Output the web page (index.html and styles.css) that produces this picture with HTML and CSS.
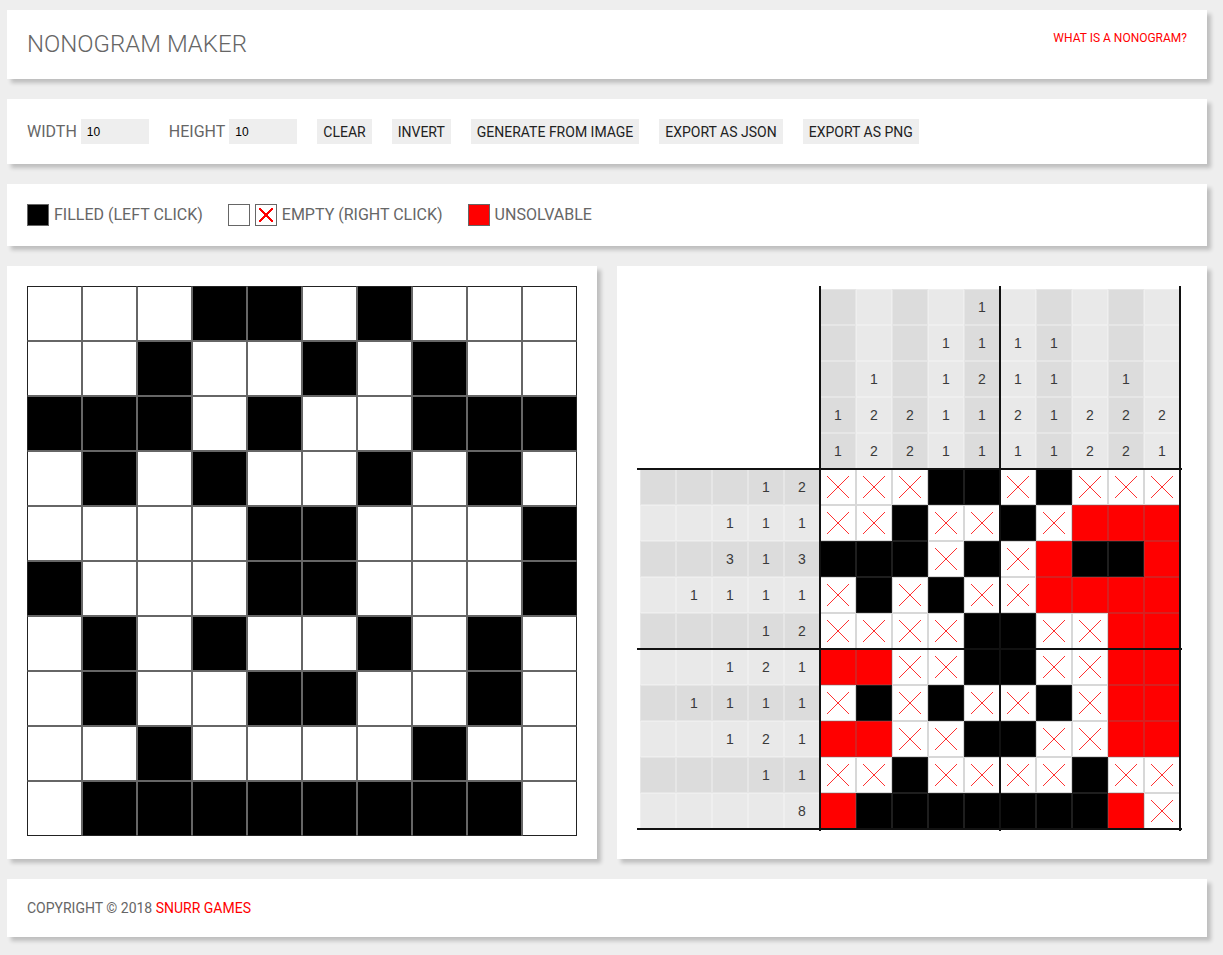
FILE: index.html
```html
<!DOCTYPE html>
<html lang="en">
<head>
<meta charset="utf-8">
<title>Nonogram Maker</title>
<link rel="stylesheet" href="styles.css">
</head>
<body>
<div class="page">
  <header class="card header">
    <h1 class="title">NONOGRAM MAKER</h1>
    <a class="link" href="#">WHAT IS A NONOGRAM?</a>
  </header>

  <section class="card toolbar">
    <label class="field"><span class="label">WIDTH</span><input class="num" type="text" value="10"></label>
    <label class="field"><span class="label">HEIGHT</span><input class="num" type="text" value="10"></label>
    <button class="btn">CLEAR</button>
    <button class="btn">INVERT</button>
    <button class="btn">GENERATE FROM IMAGE</button>
    <button class="btn">EXPORT AS JSON</button>
    <button class="btn">EXPORT AS PNG</button>
  </section>

  <section class="card legend">
    <div class="item"><span class="swatch fill"></span><span>FILLED (LEFT CLICK)</span></div>
    <div class="item"><span class="swatch"></span><span class="swatch cross"></span><span>EMPTY (RIGHT CLICK)</span></div>
    <div class="item"><span class="swatch red"></span><span>UNSOLVABLE</span></div>
  </section>

  <main class="panels">
    <section class="card panel">
      <div class="draw">
        <i></i><i></i><i></i><i class="on"></i><i class="on"></i><i></i><i class="on"></i><i></i><i></i><i></i>
        <i></i><i></i><i class="on"></i><i></i><i></i><i class="on"></i><i></i><i class="on"></i><i></i><i></i>
        <i class="on"></i><i class="on"></i><i class="on"></i><i></i><i class="on"></i><i></i><i></i><i class="on"></i><i class="on"></i><i class="on"></i>
        <i></i><i class="on"></i><i></i><i class="on"></i><i></i><i></i><i class="on"></i><i></i><i class="on"></i><i></i>
        <i></i><i></i><i></i><i></i><i class="on"></i><i class="on"></i><i></i><i></i><i></i><i class="on"></i>
        <i class="on"></i><i></i><i></i><i></i><i class="on"></i><i class="on"></i><i></i><i></i><i></i><i class="on"></i>
        <i></i><i class="on"></i><i></i><i class="on"></i><i></i><i></i><i class="on"></i><i></i><i class="on"></i><i></i>
        <i></i><i class="on"></i><i></i><i></i><i class="on"></i><i class="on"></i><i></i><i></i><i class="on"></i><i></i>
        <i></i><i></i><i class="on"></i><i></i><i></i><i></i><i></i><i class="on"></i><i></i><i></i>
        <i></i><i class="on"></i><i class="on"></i><i class="on"></i><i class="on"></i><i class="on"></i><i class="on"></i><i class="on"></i><i class="on"></i><i></i>
      </div>
    </section>

    <section class="card panel">
      <div class="board">
        <div class="corner"></div>
        <!-- column clues -->
        <i class="k d"></i><i class="k l"></i><i class="k d"></i><i class="k l"></i><i class="k d">1</i><i class="k l"></i><i class="k d"></i><i class="k l"></i><i class="k d"></i><i class="k l"></i>
        <i class="k d"></i><i class="k l"></i><i class="k d"></i><i class="k l">1</i><i class="k d">1</i><i class="k l">1</i><i class="k d">1</i><i class="k l"></i><i class="k d"></i><i class="k l"></i>
        <i class="k d"></i><i class="k l">1</i><i class="k d"></i><i class="k l">1</i><i class="k d">2</i><i class="k l">1</i><i class="k d">1</i><i class="k l"></i><i class="k d">1</i><i class="k l"></i>
        <i class="k d">1</i><i class="k l">2</i><i class="k d">2</i><i class="k l">1</i><i class="k d">1</i><i class="k l">2</i><i class="k d">1</i><i class="k l">2</i><i class="k d">2</i><i class="k l">2</i>
        <i class="k d">1</i><i class="k l">2</i><i class="k d">2</i><i class="k l">1</i><i class="k d">1</i><i class="k l">1</i><i class="k d">1</i><i class="k l">2</i><i class="k d">2</i><i class="k l">1</i>
        <!-- row 0 -->
        <i class="k d"></i><i class="k d"></i><i class="k d"></i><i class="k d">1</i><i class="k d">2</i>
        <i class="g x"></i><i class="g x"></i><i class="g x"></i><i class="g b"></i><i class="g b"></i><i class="g x"></i><i class="g b"></i><i class="g x"></i><i class="g x"></i><i class="g x"></i>
        <!-- row 1 -->
        <i class="k l"></i><i class="k l"></i><i class="k l">1</i><i class="k l">1</i><i class="k l">1</i>
        <i class="g x"></i><i class="g x"></i><i class="g b"></i><i class="g x"></i><i class="g x"></i><i class="g b"></i><i class="g x"></i><i class="g r"></i><i class="g r"></i><i class="g r"></i>
        <!-- row 2 -->
        <i class="k d"></i><i class="k d"></i><i class="k d">3</i><i class="k d">1</i><i class="k d">3</i>
        <i class="g b"></i><i class="g b"></i><i class="g b"></i><i class="g x"></i><i class="g b"></i><i class="g x"></i><i class="g r"></i><i class="g b"></i><i class="g b"></i><i class="g r"></i>
        <!-- row 3 -->
        <i class="k l"></i><i class="k l">1</i><i class="k l">1</i><i class="k l">1</i><i class="k l">1</i>
        <i class="g x"></i><i class="g b"></i><i class="g x"></i><i class="g b"></i><i class="g x"></i><i class="g x"></i><i class="g r"></i><i class="g r"></i><i class="g r"></i><i class="g r"></i>
        <!-- row 4 -->
        <i class="k d"></i><i class="k d"></i><i class="k d"></i><i class="k d">1</i><i class="k d">2</i>
        <i class="g x"></i><i class="g x"></i><i class="g x"></i><i class="g x"></i><i class="g b"></i><i class="g b"></i><i class="g x"></i><i class="g x"></i><i class="g r"></i><i class="g r"></i>
        <!-- row 5 -->
        <i class="k l"></i><i class="k l"></i><i class="k l">1</i><i class="k l">2</i><i class="k l">1</i>
        <i class="g r"></i><i class="g r"></i><i class="g x"></i><i class="g x"></i><i class="g b"></i><i class="g b"></i><i class="g x"></i><i class="g x"></i><i class="g r"></i><i class="g r"></i>
        <!-- row 6 -->
        <i class="k d"></i><i class="k d">1</i><i class="k d">1</i><i class="k d">1</i><i class="k d">1</i>
        <i class="g x"></i><i class="g b"></i><i class="g x"></i><i class="g b"></i><i class="g x"></i><i class="g x"></i><i class="g b"></i><i class="g x"></i><i class="g r"></i><i class="g r"></i>
        <!-- row 7 -->
        <i class="k l"></i><i class="k l"></i><i class="k l">1</i><i class="k l">2</i><i class="k l">1</i>
        <i class="g r"></i><i class="g r"></i><i class="g x"></i><i class="g x"></i><i class="g b"></i><i class="g b"></i><i class="g x"></i><i class="g x"></i><i class="g r"></i><i class="g r"></i>
        <!-- row 8 -->
        <i class="k d"></i><i class="k d"></i><i class="k d"></i><i class="k d">1</i><i class="k d">1</i>
        <i class="g x"></i><i class="g x"></i><i class="g b"></i><i class="g x"></i><i class="g x"></i><i class="g x"></i><i class="g x"></i><i class="g b"></i><i class="g x"></i><i class="g x"></i>
        <!-- row 9 -->
        <i class="k l"></i><i class="k l"></i><i class="k l"></i><i class="k l"></i><i class="k l">8</i>
        <i class="g r"></i><i class="g b"></i><i class="g b"></i><i class="g b"></i><i class="g b"></i><i class="g b"></i><i class="g b"></i><i class="g b"></i><i class="g r"></i><i class="g x"></i>

        <span class="line v v1"></span><span class="line v v2"></span><span class="line v v3"></span>
        <span class="line h h1"></span><span class="line h h2"></span><span class="line h h3"></span>
      </div>
    </section>
  </main>

  <footer class="card footer">COPYRIGHT © 2018 <a class="link-inline" href="#">SNURR GAMES</a></footer>
</div>
</body>
</html>
```

FILE: styles.css
```css
* { box-sizing: border-box; }

body {
  margin: 0;
  background: #eeeeee;
  font-family: Roboto, "Liberation Sans", Arial, sans-serif;
  color: #666;
}

.page {
  width: 1207px;
  padding: 10px 0 18px 7px;
  display: flex;
  flex-direction: column;
  gap: 20px;
}

.card {
  background: #fff;
  box-shadow: 4px 4px 4px rgba(0, 0, 0, 0.2);
  padding: 20px;
}

/* header */
.header {
  display: flex;
  justify-content: space-between;
  align-items: flex-start;
}
.title {
  margin: 0;
  font-size: 24px;
  font-weight: 300;
  line-height: 29px;
  color: #666;
}
.link {
  color: #ff0000;
  font-size: 12px;
  line-height: 16px;
  margin-top: 0;
  text-decoration: none;
}

/* toolbar */
.toolbar {
  display: flex;
  align-items: center;
  gap: 20px;
}
.field {
  display: flex;
  align-items: center;
  gap: 4px;
}
.label {
  font-size: 16px;
  color: #666;
}
.num {
  width: 68px;
  height: 25px;
  border: 0;
  background: #eee;
  padding: 0 6px;
  font-family: "Liberation Sans", Arial, sans-serif;
  font-size: 12px;
  color: #000;
}
.btn {
  height: 25px;
  border: 0;
  background: #eee;
  padding: 0 6px;
  font-family: Roboto, "Liberation Sans", Arial, sans-serif;
  font-size: 14px;
  font-weight: 400;
  color: #222;
}

/* legend */
.legend {
  display: flex;
  align-items: center;
  gap: 25px;
  font-size: 16px;
  line-height: 22px;
  color: #666;
}
.item {
  display: flex;
  align-items: center;
  gap: 5px;
}
.swatch {
  width: 22px;
  height: 22px;
  border: 1px solid #666;
  background: #fff;
  position: relative;
}
.swatch.fill { background: #000; }
.swatch.red { background: #ff0000; }
.swatch.cross::after {
  content: "";
  position: absolute;
  inset: 3px;
  background:
    linear-gradient(45deg, transparent calc(50% - 1px), #ff0000 calc(50% - 1px), #ff0000 calc(50% + 1px), transparent calc(50% + 1px)),
    linear-gradient(-45deg, transparent calc(50% - 1px), #ff0000 calc(50% - 1px), #ff0000 calc(50% + 1px), transparent calc(50% + 1px));
}

/* panels */
.panels {
  display: flex;
  gap: 20px;
}
.panel {
  width: 590px;
  flex: 0 0 590px;
}

/* drawing grid */
.draw {
  display: grid;
  grid-template-columns: repeat(10, 55px);
  grid-auto-rows: 55px;
  margin-bottom: 3px;
}
.draw i {
  display: block;
  border: 1px solid #666;
  background: #fff;
}
.draw i.on { background: #000; }
.draw i:nth-child(10n+1) { border-left-color: #222; }
.draw i:nth-child(10n) { border-right-color: #222; }
.draw i:nth-child(-n+10) { border-top-color: #222; }
.draw i:nth-child(n+91) { border-bottom-color: #222; }

/* nonogram board */
.board {
  position: relative;
  display: grid;
  grid-template-columns: repeat(15, 36px);
  grid-auto-rows: 36px;
  padding: 3px 0 0 3px;
  width: 545px;
  height: 545px;
}
.corner {
  grid-column: 1 / 6;
  grid-row: 1 / 6;
}
.k {
  display: flex;
  align-items: center;
  justify-content: center;
  font-style: normal;
  font-family: "Liberation Sans", Arial, sans-serif;
  font-size: 14px;
  color: #3a3a3a;
  border: 1px solid rgba(255, 255, 255, 0.3);
}
.k.d { background: #dcdcdc; }
.k.l { background: #e9e9e9; }

.g {
  display: block;
  position: relative;
  border: 1px solid rgba(128, 128, 128, 0.3);
}
.g.b { background: #000; border-color: #1e1e1e; }
.g.r { background: #ff0000; border-color: #d82020; }
.g.x { background: #fff; border-color: #d8d8d8; }
.g.x::after {
  content: "";
  position: absolute;
  inset: 6px;
  background:
    linear-gradient(45deg, transparent calc(50% - 0.6px), #ff3030 calc(50% - 0.6px), #ff3030 calc(50% + 0.6px), transparent calc(50% + 0.6px)),
    linear-gradient(-45deg, transparent calc(50% - 0.6px), #ff3030 calc(50% - 0.6px), #ff3030 calc(50% + 0.6px), transparent calc(50% + 0.6px));
}

.line {
  position: absolute;
  background: #111;
}
.v { top: 0; width: 2px; height: 545px; }
.v1 { left: 182px; }
.v2 { left: 362px; }
.v3 { left: 542px; }
.h { left: 0; height: 2px; width: 545px; }
.h1 { top: 182px; }
.h2 { top: 362px; }
.h3 { top: 542px; }

/* footer */
.footer {
  font-size: 14px;
  line-height: 18px;
  color: #666;
}
.link-inline {
  color: #ff0000;
  text-decoration: none;
}
```
